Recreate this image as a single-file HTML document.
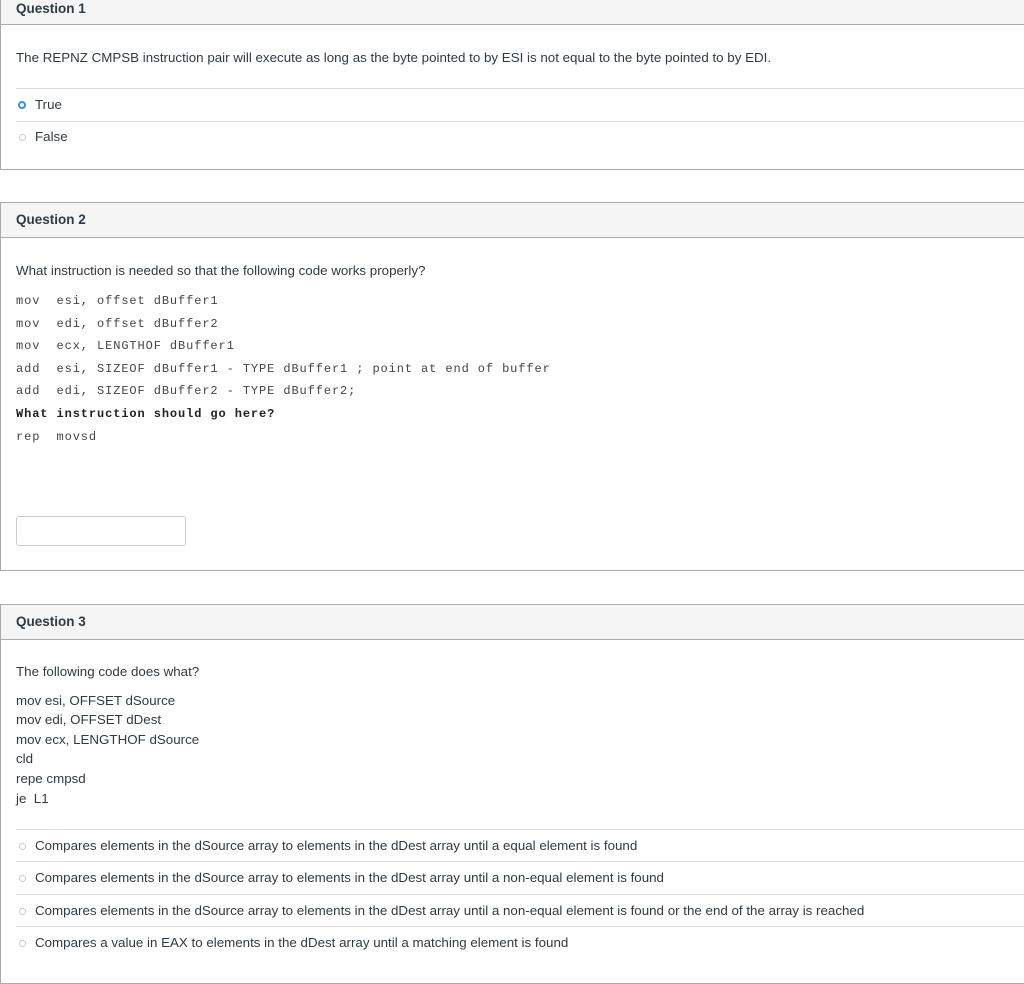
<!DOCTYPE html>
<html><head><style>
body{margin:0;width:1024px;height:970px;overflow:hidden;background:#fff;font-family:"Liberation Sans",sans-serif;font-size:13.35px;color:#2d3b45;position:relative}
.box{position:absolute;left:0;width:1030px;border:1px solid #aaa;border-right:none;box-sizing:border-box}
.hd{position:absolute;left:0;right:0;top:0;background:#f5f5f5;border-bottom:1px solid #aaa;box-sizing:border-box}
.hd b{position:absolute;left:15px;font-size:13.5px;color:#2d3b45}
.t{position:absolute;left:16px;white-space:nowrap;line-height:16px}
.sep{position:absolute;left:16px;width:1010px;height:1px;background:#ddd}
.m{font-family:"Liberation Mono",monospace;font-size:12px;letter-spacing:0.9px;color:#444}
.r{position:absolute;left:19px;width:7px;height:7px;border:1px solid #ccc;border-radius:50%;box-sizing:border-box}
.rs{border:2px solid #3a8ee6;width:8px;height:8px;left:18px}
</style></head><body>
<div class="box" style="top:-1px;height:171px"><div class="hd" style="height:25px"><b style="top:1px">Question 1</b></div></div>
<div class="t" style="top:50px">The REPNZ CMPSB instruction pair will execute as long as the byte pointed to by ESI is not equal to the byte pointed to by EDI.</div>
<div class="sep" style="top:88px"></div>
<div class="r rs" style="top:101px"></div><div class="t" style="left:35px;top:97px">True</div>
<div class="sep" style="top:121px"></div>
<div class="r" style="top:134px"></div><div class="t" style="left:35px;top:129px">False</div>

<div class="box" style="top:202px;height:369px"><div class="hd" style="height:35px"><b style="top:9px">Question 2</b></div></div>
<div class="t" style="top:263px">What instruction is needed so that the following code works properly?</div>
<div class="t m" style="top:293px">mov&nbsp;&nbsp;esi, offset dBuffer1</div>
<div class="t m" style="top:316px">mov&nbsp;&nbsp;edi, offset dBuffer2</div>
<div class="t m" style="top:338px">mov&nbsp;&nbsp;ecx, LENGTHOF dBuffer1</div>
<div class="t m" style="top:361px">add&nbsp;&nbsp;esi, SIZEOF dBuffer1 - TYPE dBuffer1 ; point at end of buffer</div>
<div class="t m" style="top:383px">add&nbsp;&nbsp;edi, SIZEOF dBuffer2 - TYPE dBuffer2;</div>
<div class="t m" style="top:406px;font-weight:bold;color:#222">What instruction should go here?</div>
<div class="t m" style="top:429px">rep&nbsp;&nbsp;movsd</div>
<div style="position:absolute;left:16px;top:516px;width:170px;height:30px;border:1px solid #ccc;border-radius:3px;box-sizing:border-box"></div>

<div class="box" style="top:604px;height:380px"><div class="hd" style="height:35px"><b style="top:9px">Question 3</b></div></div>
<div class="t" style="top:664px">The following code does what?</div>
<div class="t" style="top:693px">mov esi, OFFSET dSource</div>
<div class="t" style="top:712px">mov edi, OFFSET dDest</div>
<div class="t" style="top:732px">mov ecx, LENGTHOF dSource</div>
<div class="t" style="top:751px">cld</div>
<div class="t" style="top:771px">repe cmpsd</div>
<div class="t" style="top:791px">je&nbsp; L1</div>
<div class="sep" style="top:829px"></div>
<div class="r" style="top:843px"></div><div class="t" style="left:35px;top:838px">Compares elements in the dSource array to elements in the dDest array until a equal element is found</div>
<div class="sep" style="top:861px"></div>
<div class="r" style="top:875px"></div><div class="t" style="left:35px;top:870px">Compares elements in the dSource array to elements in the dDest array until a non-equal element is found</div>
<div class="sep" style="top:894px"></div>
<div class="r" style="top:908px"></div><div class="t" style="left:35px;top:903px">Compares elements in the dSource array to elements in the dDest array until a non-equal element is found or the end of the array is reached</div>
<div class="sep" style="top:926px"></div>
<div class="r" style="top:940px"></div><div class="t" style="left:35px;top:935px">Compares a value in EAX to elements in the dDest array until a matching element is found</div>
</body></html>
